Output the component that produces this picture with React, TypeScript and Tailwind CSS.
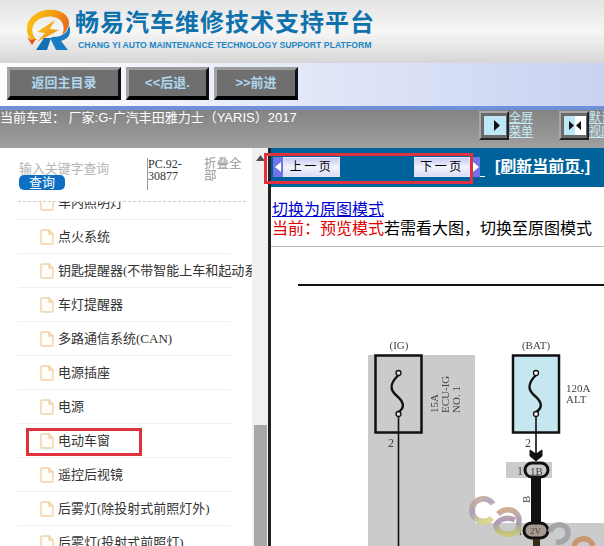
const FONT = "font-['Liberation_Sans','Noto_Sans_CJK_SC',sans-serif]";

function Logo() {
  return (
    <svg width="48" height="42" viewBox="0 0 48 42" className="shrink-0">
      <defs>
        <linearGradient id="lg" x1="0" y1="0" x2="1" y2="0.3">
          <stop offset="0" stopColor="#f9c916" />
          <stop offset="0.55" stopColor="#f6a313" />
          <stop offset="1" stopColor="#e8701a" />
        </linearGradient>
        <linearGradient id="bolt" x1="0" y1="0" x2="1" y2="1">
          <stop offset="0" stopColor="#f9d21e" />
          <stop offset="1" stopColor="#ee7f16" />
        </linearGradient>
      </defs>
      <path d="M7 31 C-2 20 4 4 22 1 C36 -1 46 6 45 15 C44 20 41 24 38 26 C41 20 40 12 33 9 C24 5 12 9 9 17 C7 23 9 28 13 31 Z" fill="url(#lg)" />
      <path d="M3 28 L7 31 L12 30 L8 36 Z" fill="#e2531c" />
      <path d="M31 11 L13 23 L21 24 L13 33 L35 21 L26 20 Z" fill="url(#bolt)" />
      <path d="M12 41 L20 29 L27 29 L23 41 Z" fill="#1170b8" />
      <path d="M29 28 C38 28 44 24 45 16 C48 24 45 30 37 32 L44 41 L32 41 L26 29 Z" fill="#1b7cc4" />
    </svg>
  );
}

function FileIcon() {
  return (
    <svg width="14" height="16" viewBox="0 0 14 16" className="shrink-0">
      <path d="M1 2 Q1 1 2 1 L9 1 L13 5 L13 14 Q13 15 12 15 L2 15 Q1 15 1 14 Z M9 1 L9 5 L13 5" fill="#fffdf8" stroke="#f1d2a6" strokeWidth="1.4" />
    </svg>
  );
}

function TopButton({ label, w }: { label: string; w: string }) {
  return (
    <div className={`${w} h-[33px] flex items-center justify-center bg-[#6f6f6f] border-[3px] border-t-[#9c9c9c] border-l-[#a5a5a5] border-r-[#111] border-b-black border-b-[4px] text-[13px] font-bold text-[#aed6ee]`}>
      {label}
    </div>
  );
}

function ViewIcon({ wide }: { wide?: boolean }) {
  return (
    <div className="w-[30px] h-[29px] bg-[#6a6a6a] border-[2px] border-t-[#a8a8a8] border-l-[#a8a8a8] border-r-[#222] border-b-[#222] p-[3px]">
      <svg width="22" height="19" viewBox="0 0 22 19">
        <rect width="22" height="19" fill={wide ? "#ffffff" : "#bfe8f6"} />
        {wide && <rect width="11" height="19" fill="#bfe8f6" />}
        {wide ? (
          <>
            <path d="M5 5 L10 9.5 L5 14 Z" fill="#111" />
            <path d="M17 5 L12 9.5 L17 14 Z" fill="#111" />
          </>
        ) : (
          <path d="M10 4 L16 9.5 L10 15 Z" fill="#111" />
        )}
      </svg>
    </div>
  );
}

function PageButton({ label, dir }: { label: string; dir: "prev" | "next" }) {
  const arrow = (
    <div className="w-[10px] h-[20px] bg-[#6f74e6] flex items-center justify-center">
      <svg width="7" height="10" viewBox="0 0 7 10">
        <path d={dir === "prev" ? "M6 0 L0 5 L6 10 Z" : "M1 0 L7 5 L1 10 Z"} fill="#fff" />
      </svg>
    </div>
  );
  return (
    <div className="flex items-center">
      {dir === "prev" && arrow}
      <div className={`${dir === "prev" ? "w-[57px]" : "w-[56px]"} h-[20px] flex items-center justify-center bg-gradient-to-b from-[#c9c9f4] via-[#f3f3fd] to-[#dcdcf8] border border-[#e5e5fa] text-[12px] tracking-[2.5px] text-black`}>
        {label}
      </div>
      {dir === "next" && arrow}
    </div>
  );
}

const items = [
  "车内照明灯",
  "点火系统",
  "钥匙提醒器(不带智能上车和起动系统)",
  "车灯提醒器",
  "多路通信系统(CAN)",
  "电源插座",
  "电源",
  "电动车窗",
  "遥控后视镜",
  "后雾灯(除投射式前照灯外)",
  "后雾灯(投射式前照灯)",
];

function Diagram() {
  return (
    <svg width="333" height="299" viewBox="271 247 333 299" className="block blur-[0.35px]">
      <defs>
        <linearGradient id="wm" x1="0" y1="0" x2="0.6" y2="1">
          <stop offset="0" stopColor="#c9a98a" />
          <stop offset="0.45" stopColor="#a89ab8" />
          <stop offset="1" stopColor="#d6d27c" />
        </linearGradient>
        <linearGradient id="wm2" x1="0" y1="0" x2="0" y2="1">
          <stop offset="0" stopColor="#c8a183" />
          <stop offset="0.5" stopColor="#9e8bb0" />
          <stop offset="1" stopColor="#c7c96a" />
        </linearGradient>
      </defs>
      <rect x="298" y="284" width="306" height="2" fill="#111" />
      <rect x="368" y="355" width="107" height="191" fill="#cbcbcb" />
      <rect x="475" y="523" width="129" height="23" fill="#cbcbcb" />
      <rect x="375.5" y="355.5" width="46" height="77" fill="#cbcbcb" stroke="#111" strokeWidth="2.5" />
      <rect x="513" y="355.5" width="46" height="77" fill="#c6e7ef" stroke="#111" strokeWidth="2.5" />
      <path d="M398.5 375 C388 385 391 391 397 396 C404 402 405 408 398.5 412" fill="none" stroke="#111" strokeWidth="2.4" />
      <circle cx="398.5" cy="373" r="2.5" fill="#ddd" stroke="#111" strokeWidth="1.3" />
      <circle cx="398.5" cy="414" r="2.5" fill="#ddd" stroke="#111" strokeWidth="1.3" />
      <path d="M398.5 416 L398.5 546" stroke="#111" strokeWidth="1.6" />
      <path d="M536 375 C526 385 529 391 535 396 C542 402 543 408 536 412" fill="none" stroke="#111" strokeWidth="2.4" />
      <circle cx="536" cy="373" r="2.5" fill="#fff" stroke="#111" strokeWidth="1.3" />
      <circle cx="536" cy="414" r="2.5" fill="#fff" stroke="#111" strokeWidth="1.3" />
      <path d="M536 416 L536 455" stroke="#111" strokeWidth="1.6" />
      <path d="M530 450 L536 454 L542 450 L542 456 L536 461 L530 456 Z" fill="#111" stroke="#111" />
      <rect x="506" y="462" width="46" height="16" fill="#cbcbcb" />
      <rect x="525" y="463" width="23" height="14" rx="7" fill="#cbcbcb" stroke="#111" strokeWidth="3" />
      <rect x="531" y="478" width="10" height="46" fill="#111" />
      <rect x="524" y="523" width="24" height="15" rx="7.5" fill="#a89a90" stroke="#111" strokeWidth="3" />
      <rect x="533" y="539" width="7" height="7" fill="#3a2a1a" />
      <g fontFamily="Liberation Serif, serif" fill="#444" fontSize="11">
        <text x="399" y="349" textAnchor="middle">(IG)</text>
        <text x="536" y="349" textAnchor="middle">(BAT)</text>
        <text x="566" y="392">120A</text>
        <text x="566" y="403">ALT</text>
        <text x="388" y="447" fontSize="12">2</text>
        <text x="525" y="447" fontSize="12">2</text>
        <text x="517" y="475" fontSize="12">1</text>
        <text x="530" y="475" fontSize="11">1B</text>
        <text x="518" y="535" fontSize="9">1</text>
        <text x="530" y="534" fontSize="9">2V</text>
        <text transform="translate(438 413) rotate(-90)">15A</text>
        <text transform="translate(449 413) rotate(-90)">ECU-IG</text>
        <text transform="translate(460 413) rotate(-90)">NO. 1</text>
        <text transform="translate(530 503) rotate(-90)">B</text>
      </g>
      <g fill="none" opacity="0.85">
        <path d="M493 504 C488 496 473 497 472 510 C472 521 485 525 492 518" stroke="url(#wm)" strokeWidth="6" />
        <path d="M498 514 C506 506 519 510 519 520 L518 533 M515 520 C506 516 497 520 496 526 C497 534 510 537 517 531" stroke="url(#wm2)" strokeWidth="5.5" />
        <path d="M550 532 C552 522 569 522 568 534 C567 540 562 543 556 542" stroke="#9e9ea6" strokeWidth="5.5" />
        <path d="M574 546 C575 538 590 535 593 546" stroke="#c88e5c" strokeWidth="5.5" />
      </g>
    </svg>
  );
}

export default function App() {
  return (
    <div className={`${FONT} relative w-[604px] h-[546px] overflow-hidden bg-white flex flex-col`}>
      <header className="h-[63px] shrink-0 bg-gradient-to-b from-[#e3e3e3] via-[#f6f6f6] to-[#d6d6d6] flex items-start pl-[24px] pt-[9px] gap-[3px]">
        <Logo />
        <div className="flex flex-col">
          <div className="text-[24px] leading-[28px] font-bold tracking-[1px] text-[#0f72ac] whitespace-nowrap">畅易汽车维修技术支持平台</div>
          <div className="text-[8.7px] leading-[12px] mt-[2px] font-bold text-[#1d86c4] whitespace-nowrap ml-[3px]">CHANG YI AUTO MAINTENANCE TECHNOLOGY SUPPORT PLATFORM</div>
        </div>
      </header>

      <div className="h-[43px] shrink-0 bg-gradient-to-r from-white via-[#e3e8f8] to-[#c8d3f1] flex items-start gap-[5px] pl-[7px] pt-[4px]">
        <TopButton label="返回主目录" w="w-[114px]" />
        <TopButton label="<<后退." w="w-[83px]" />
        <TopButton label=">>前进" w="w-[84px]" />
      </div>
      <div className="h-[4px] shrink-0 bg-[#6f8fd6]" />

      <div className="h-[38px] shrink-0 bg-gradient-to-b from-[#838383] to-[#a0a0a0] flex items-start">
        <div className="w-[479px] shrink-0 text-[13px] leading-[16px] text-white whitespace-nowrap overflow-hidden">当前车型： 厂家:G-广汽丰田雅力士（YARIS）2017</div>
        <div className="flex items-start pt-[1px]">
          <ViewIcon />
          <div className="w-[50px] text-[12px] leading-[14px] text-[#c6ecf8] underline">全屏<br />菜单</div>
          <ViewIcon wide />
          <div className="text-[12px] leading-[14px] text-[#c6ecf8] underline whitespace-nowrap">默认<br />视图</div>
        </div>
      </div>

      <div className="flex-1 flex min-h-0">
        <aside className="w-[252px] shrink-0 flex flex-col overflow-hidden">
          <div className="h-[53px] shrink-0 flex pl-[19px] pt-[10px]">
            <div className="w-[128px] shrink-0">
              <div className="w-[90px] h-[17px] overflow-hidden whitespace-nowrap text-[12.9px] leading-[21px] text-[#b4b4b4]">输入关键字查询</div>
              <div className="w-[46px] h-[15px] rounded-[5px] bg-[#0d6fc4] text-white text-[13px] leading-[15px] text-center">查询</div>
            </div>
            <div className="w-[57px] shrink-0 h-[32px] border-l border-[#999] font-['Liberation_Serif','Noto_Sans_CJK_SC',serif] text-[12px] leading-[12px] text-[#333]">PC.92-<br />30877</div>
            <div className="w-[38px] text-[12.5px] leading-[12px] text-[#999]">折叠全部</div>
          </div>
          <div className="ml-[18px] w-[228px] shrink-0 border-t border-dashed border-[#ccc]" />
          <div className="ml-[18px] w-[234px] flex-1 overflow-hidden">
            <ul className="w-[213px] -mt-[16px]">
              {items.map((t) => (
                <li key={t} className="h-[34px] flex items-center gap-[4px] pl-[22px] border-b border-[#f0f0f0] font-['Liberation_Serif','Noto_Sans_CJK_SC',serif] text-[13px] text-[#333] whitespace-nowrap">
                  <FileIcon />
                  <span>{t}</span>
                </li>
              ))}
            </ul>
          </div>
        </aside>

        <div className="w-[16px] shrink-0 bg-[#f1f1f1] flex flex-col items-center justify-between">
          <svg width="9" height="6" viewBox="0 0 9 6" className="mt-[7px]">
            <path d="M0 6 L4.5 0 L9 6 Z" fill="#505050" />
          </svg>
          <div className="w-[13px] h-[121px] bg-[#a8a8a8]" />
        </div>
        <div className="w-[3px] shrink-0 bg-[#222]" />

        <main className="flex-1 min-w-0 flex flex-col">
          <div className="h-[39px] shrink-0 bg-[#00629a] flex items-center pl-[2px] pb-[1px]">
            <PageButton label="上一页" dir="prev" />
            <div className="w-[74px]" />
            <PageButton label="下一页" dir="next" />
            <div className="w-[5px] h-[20px] border-b border-white" />
            <a className="ml-[10px] text-[16px] font-bold text-white underline whitespace-nowrap">[刷新当前页.]</a>
          </div>
          <div className="h-[60px] shrink-0 pl-[1px] pt-[13px] border-b border-[#bbb] text-[16px] leading-[19px] whitespace-nowrap">
            <a className="text-[#0000d0] underline">切换为原图模式</a>
            <div>
              <span className="text-[#e00000]">当前：预览模式</span>
              <span className="text-black">若需看大图，切换至原图模式</span>
            </div>
          </div>
          <Diagram />
        </main>
      </div>

      <div className="absolute left-[264px] top-[153px] w-[209px] h-[31px] border-[3px] border-[#e0323e]" />
      <div className="absolute left-[26px] top-[428px] w-[116px] h-[28px] border-[3px] border-[#e0323e]" />
    </div>
  );
}
